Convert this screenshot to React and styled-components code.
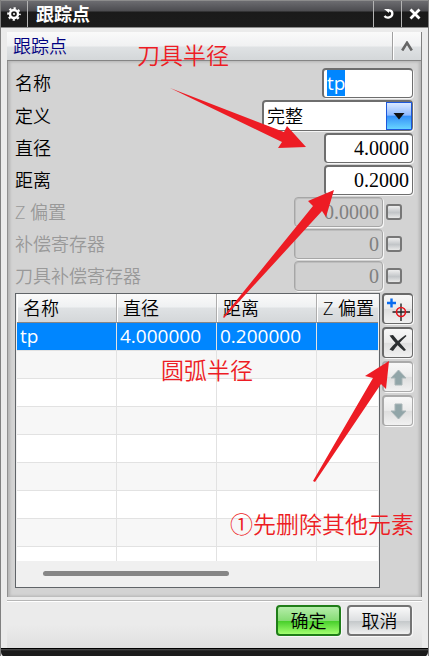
import React, { useEffect, useRef } from "react";
import styled, { createGlobalStyle } from "styled-components";

const GlobalStyle = createGlobalStyle`
  *, *::before, *::after { box-sizing: border-box; }
  body { margin: 0; background: #ebebeb; }
  body, button, input, select, table {
    font-family: "Open Sans", "Noto Sans CJK SC", sans-serif;
    font-size: 18px;
    font-weight: 350;
    color: #000;
  }
`;

const Dialog = styled.main`
  position: relative;
  display: flex;
  flex-direction: column;
  background: #ebebeb;
  border-left: 1px solid #808080;
  border-right: 1px solid #808080;
`;

const TitleBar = styled.header`
  display: flex;
  align-items: stretch;
  height: 28px;
  border-top: 1px solid #8c8c8c;
  border-bottom: 1px solid #8c8c8c;
  background: linear-gradient(#6c6c70 0, #4c4c50 10px, #1a1a1a 11px, #1c1c1c 100%);
`;

const TitleButton = styled.button`
  display: grid;
  place-items: center;
  width: ${(p) => p.$width}px;
  padding: 0;
  border: 0;
  border-${(p) => p.$edge}: 1px solid #b4b4b4;
  background: none;
`;

const Title = styled.h1`
  flex: 1;
  margin: 0;
  padding-left: 8px;
  color: #fff;
  font-size: 18px;
  line-height: 26px;
  font-weight: 700;
`;

const Group = styled.section`
  margin: 4px 6px 0;
  border-right: 1px solid #808080;
`;

const GroupHeader = styled.div`
  display: flex;
  height: 29px;
  border-bottom: 1px solid #858585;
  background: linear-gradient(#fafafa 0, #f0f1f2 14px, #dfe2e4 15px, #d4d7d9 100%);
`;

const GroupTitle = styled.h2`
  flex: 1;
  margin: 0;
  padding-left: 6px;
  color: #000080;
  font-size: 18px;
  line-height: 29px;
  font-weight: 350;
`;

const CollapseButton = styled.button`
  display: grid;
  place-items: center;
  width: 29px;
  padding: 0;
  border: 0;
  border-left: 1px solid #a0a0a0;
  box-shadow: inset 1px 0 #fff;
  background: none;
`;

const GroupBody = styled.div`
  padding: 5px 8px 9px 7px;
  border-left: 1px solid #909090;
  background: #d3d3d3;
  box-shadow: inset 3px 0 3px -1px #b4b4b4, inset -3px 0 3px -1px #b4b4b4,
    inset 0 3px 3px -2px #b8b8b8, inset 0 -3px 3px -2px #b8b8b8;
`;

const Field = styled.div`
  display: flex;
  align-items: center;
  height: ${(p) => (p.$tall ? 33 : 32)}px;
`;

const FieldLabel = styled.label`
  flex: 1;
  line-height: 30px;
  color: ${(p) => (p.$off ? "#999" : "#000")};
`;

const TextBox = styled.input`
  width: 91px;
  height: 30px;
  padding: 0 3px;
  border: 2px solid #6e6e6e;
  border-right-width: 1px;
  border-bottom-width: 1px;
  border-radius: 4px;
  outline: 0;
  background: #fff;
  box-shadow: 1px 1px #f6f6f6;
  font-size: 19px;
  font-weight: 400;
  line-height: 24px;
  caret-color: transparent;
  &::selection { background: #0086ff; color: #fff; }
`;

const NumberBox = styled(TextBox)`
  width: 89px;
  font-family: "Liberation Serif", serif;
  font-size: 20px;
  text-align: right;
  &:disabled {
    color: #808080;
    background: #d0d0d0;
    border: 1px solid #a6a6a6;
    box-shadow: 1px 1px #f6f6f6, inset 1px 1px #bdbdbd;
    opacity: 1;
  }
`;

const Tick = styled.input`
  appearance: none;
  width: 16px;
  height: 16px;
  margin: 0 11px 0 3px;
  border: 2px solid #777;
  border-radius: 3px;
  background: linear-gradient(#eee, #c2c5c8 55%, #e8e8e8);
`;

const SelectFrame = styled.div`
  display: grid;
  width: 151px;
  height: 31px;
  border: 2px solid #6e6e6e;
  border-right-width: 1px;
  border-bottom-width: 1px;
  border-radius: 4px;
  background: #fff;
  box-shadow: 1px 1px #f6f6f6;
`;

const Select = styled.select`
  grid-area: 1 / 1;
  appearance: none;
  padding: 0 30px 0 3px;
  border: 0;
  outline: 0;
  background: none;
`;

const SelectArrow = styled.span`
  grid-area: 1 / 1;
  justify-self: end;
  display: grid;
  place-items: center;
  width: 26px;
  border: 1px solid #1d58dc;
  background: linear-gradient(#dbe9ff 0, #8fbaff 47%, #3590f8 50%, #67d4ff 100%);
  pointer-events: none;
`;

const ListArea = styled.div`
  display: flex;
  align-items: flex-start;
  gap: 2px;
  margin-top: 1px;
`;

const TableFrame = styled.div`
  flex: 1;
  min-width: 0;
  border: 1px solid #606468;
  padding: 0 1px;
  background: #f0f0f0;
`;

const Table = styled.table`
  width: 100%;
  table-layout: fixed;
  border-spacing: 0;
`;

const HeadCell = styled.th`
  width: ${(p) => (p.$last ? "auto" : "100px")};
  height: 29px;
  padding: 0 0 0 6px;
  border-right: ${(p) => (p.$last ? "0" : "1px solid #adadad")};
  border-bottom: 1px solid #858585;
  box-shadow: inset 1px 0 #fff;
  background: linear-gradient(#fafafa 0, #eff1f2 13px, #dfe2e4 14px, #d4d7d9 100%);
  font-weight: 350;
  line-height: 28px;
  text-align: left;
  white-space: nowrap;
`;

const Row = styled.tr`
  background: ${(p) => (p.$selected ? "#0086ff" : p.$shade ? "#f7f7f7" : "#fff")};
  color: ${(p) => (p.$selected ? "#fff" : "#000")};
`;

const Cell = styled.td`
  height: ${(p) => (p.$cut ? 14 : 28)}px;
  padding: 0 0 0 3px;
  border-right: 1px solid #e2e2e2;
  border-bottom: ${(p) => (p.$cut ? "0" : "1px solid #e2e2e2")};
  font-size: 19px;
  font-weight: 400;
  line-height: 27px;
  &:last-child { border-right: 0; }
`;

const ScrollTrack = styled.div`
  padding: 10px 149px 11px 26px;
`;

const ScrollThumb = styled.div`
  height: 5px;
  border-radius: 3px;
  background: #868686;
`;

const Tools = styled.div`
  display: flex;
  flex-direction: column;
  gap: 3px;
`;

const ToolButton = styled.button`
  display: grid;
  place-items: center;
  width: 31px;
  height: 31px;
  padding: 0;
  border: 2px solid #6a6a6a;
  border-right-width: 1px;
  border-bottom-width: 1px;
  border-radius: 4px;
  background: linear-gradient(#f8f8f8 0, #ebebeb 48%, #dedede 50%, #f1f1f1 100%);
  box-shadow: 1px 1px #f8f8f8;
  &:disabled { border-color: #aaa; }
`;

const Footer = styled.footer`
  display: flex;
  justify-content: flex-end;
  gap: 6px;
  margin: 3px 6px 0;
  padding: 4px 10px 12px;
  border-top: 1px solid #b6b6b6;
  box-shadow: inset 0 1px #fff;
  background: linear-gradient(#ebebeb 50%, #e0e0e0);
`;

const PushButton = styled.button`
  width: 65px;
  height: 31px;
  padding: 0;
  border: 2px solid ${(p) => (p.$primary ? "#1f7d18" : "#747474")};
  border-radius: 4px;
  line-height: 26px;
  background: ${(p) =>
    p.$primary
      ? "linear-gradient(#b5edaa 0, #87dc75 50%, #48cf2b 53%, #a3ff70 100%)"
      : "linear-gradient(#fafafa 0, #dddfe1 50%, #c5c9cb 53%, #f1f1f1 100%)"};
  box-shadow: 1px 1px #f8f8f8;
`;

const BottomEdge = styled.div`
  height: 9px;
  border-top: 1px solid #000;
  border-radius: 0 0 5px 5px;
  background: linear-gradient(#555 0, #1b1b1b 2px, #1b1b1b 7px, #000);
`;

const Arrows = styled.svg`
  position: absolute;
  top: 0;
  right: -1px;
  fill: #ed1c24;
  pointer-events: none;
`;

const Note = styled.p`
  position: absolute;
  top: ${(p) => p.$top}px;
  right: ${(p) => p.$right}px;
  margin: 0;
  color: #ed1c24;
  font-family: "Noto Sans CJK SC", sans-serif;
  font-size: 23px;
  line-height: 30px;
  white-space: nowrap;
  pointer-events: none;
`;

const offFields = [
  { id: "zoffset", label: "Z 偏置", value: "0.0000" },
  { id: "register", label: "补偿寄存器", value: "0" },
  { id: "cutter", label: "刀具补偿寄存器", value: "0" },
];

const columns = ["名称", "直径", "距离", "Z 偏置"];
const rows = [
  ["tp", "4.000000", "0.200000", ""],
  ...Array.from({ length: 8 }, () => ["", "", "", ""]),
];

function GearIcon() {
  return (
    <svg width="14" height="14" viewBox="0 0 14 14" fill="none" stroke="#fff">
      <circle cx="7" cy="7" r="4" strokeWidth="2.400" />
      <circle cx="7" cy="7" r="5.800" strokeWidth="2" strokeDasharray="2.2 2.355" strokeDashoffset="1.1" />
      <circle cx="7" cy="7" r="1" fill="#fff" stroke="none" />
    </svg>
  );
}

function MoveIcon({ down }) {
  return (
    <svg width="17" height="17" viewBox="0 0 17 17">
      <path
        d={down ? "M5 1H12V8H16L8.500 16L1 8H5Z" : "M8.500 1L16 9H12V16H5V9H1Z"}
        fill="#91a5a8"
        stroke="#a9b5b7"
      />
    </svg>
  );
}

export default function App() {
  const nameRef = useRef(null);

  useEffect(() => {
    nameRef.current.focus();
    nameRef.current.select();
  }, []);

  return (
    <>
      <GlobalStyle />
      <Dialog>
        <TitleBar>
          <TitleButton $width={27} $edge="right" aria-label="设置">
            <GearIcon />
          </TitleButton>
          <Title>跟踪点</Title>
          <TitleButton $width={28} $edge="left" aria-label="重置">
            <svg width="12" height="12" viewBox="0 0 12 12" fill="none" stroke="#fff" strokeWidth="2.400">
              <path d="M6 2.500C9.500 2 10.500 4 10.300 6C10 9.500 5 11 2.500 8" />
              <path d="M2 1H7V5Z" fill="#fff" stroke="none" />
            </svg>
          </TitleButton>
          <TitleButton $width={27} $edge="left" aria-label="关闭">
            <svg width="12" height="12" viewBox="0 0 12 12" stroke="#fff" strokeWidth="2.800">
              <path d="M1.500 1.500L10.500 10.500M10.500 1.500L1.500 10.500" />
            </svg>
          </TitleButton>
        </TitleBar>

        <Group>
          <GroupHeader>
            <GroupTitle>跟踪点</GroupTitle>
            <CollapseButton aria-label="折叠">
              <svg width="12" height="10" viewBox="0 0 12 10" fill="none" stroke="#666" strokeWidth="2.600">
                <path d="M1.200 9.500L6 1.800L10.800 9.500" />
              </svg>
            </CollapseButton>
          </GroupHeader>
          <GroupBody>
            <Field $tall>
              <FieldLabel htmlFor="name">名称</FieldLabel>
              <TextBox id="name" ref={nameRef} defaultValue="tp" />
            </Field>
            <Field $tall>
              <FieldLabel htmlFor="definition">定义</FieldLabel>
              <SelectFrame>
                <Select id="definition">
                  <option>完整</option>
                </Select>
                <SelectArrow>
                  <svg width="12" height="7" viewBox="0 0 12 7">
                    <path d="M0.500 0H11.500L6 6.500Z" fill="#111" />
                  </svg>
                </SelectArrow>
              </SelectFrame>
            </Field>
            <Field>
              <FieldLabel htmlFor="diameter">直径</FieldLabel>
              <NumberBox id="diameter" defaultValue="4.0000" />
            </Field>
            <Field>
              <FieldLabel htmlFor="distance">距离</FieldLabel>
              <NumberBox id="distance" defaultValue="0.2000" />
            </Field>
            {offFields.map((f) => (
              <Field key={f.id}>
                <FieldLabel htmlFor={f.id} $off>{f.label}</FieldLabel>
                <NumberBox id={f.id} defaultValue={f.value} disabled />
                <Tick type="checkbox" aria-label={f.label} />
              </Field>
            ))}

            <ListArea>
              <TableFrame>
                <Table>
                  <thead>
                    <tr>
                      {columns.map((c, i) => (
                        <HeadCell key={c} $last={i === columns.length - 1}>{c}</HeadCell>
                      ))}
                    </tr>
                  </thead>
                  <tbody>
                    {rows.map((cells, r) => (
                      <Row key={r} $selected={r === 0} $shade={r % 2 === 1}>
                        {cells.map((text, c) => (
                          <Cell key={c} $cut={r === rows.length - 1}>{text}</Cell>
                        ))}
                      </Row>
                    ))}
                  </tbody>
                </Table>
                <ScrollTrack>
                  <ScrollThumb />
                </ScrollTrack>
              </TableFrame>
              <Tools>
                <ToolButton aria-label="添加">
                  <svg width="26" height="26" viewBox="0 0 26 26" fill="none">
                    <path d="M6.500 2.500V11.500M2 7H11" stroke="#0a6cf0" strokeWidth="2.400" />
                    <path d="M16 7.500V25M7.500 16H25" stroke="#222" strokeWidth="1.400" />
                    <circle cx="16" cy="16" r="4.500" stroke="#e8141c" strokeWidth="1.600" />
                  </svg>
                </ToolButton>
                <ToolButton aria-label="删除">
                  <svg width="20" height="20" viewBox="0 0 20 20" fill="#2b2e30">
                    <path d="M1.500 2.500L5 2C8 6 14 12 18 17L16 18C10.500 13.500 5.500 8.500 1.500 2.500Z" />
                    <path d="M17.500 2L18.500 3C13 8 8.500 13 5 18L1.500 16.500C6 11 11 6.500 17.500 2Z" />
                  </svg>
                </ToolButton>
                <ToolButton aria-label="上移" disabled>
                  <MoveIcon />
                </ToolButton>
                <ToolButton aria-label="下移" disabled>
                  <MoveIcon down />
                </ToolButton>
              </Tools>
            </ListArea>
          </GroupBody>
        </Group>

        <Footer>
          <PushButton $primary>确定</PushButton>
          <PushButton>取消</PushButton>
        </Footer>
        <BottomEdge />

        <Arrows width="429" height="500" viewBox="0 0 429 500" aria-hidden="true">
          <path d="M170 88L284 132L287 126L306 147L278 148L282 142Z" />
          <path d="M223 317L313 206L308 201L334 190L326 217L322 211L224 318Z" />
          <path d="M313 481L373 378L365 376L389 361L386 389L381 384L315 482Z" />
        </Arrows>
        <Note $top={39} $right={199}>刀具半径</Note>
        <Note $top={354} $right={175}>圆弧半径</Note>
        <Note $top={508} $right={14}>①先删除其他元素</Note>
      </Dialog>
    </>
  );
}
